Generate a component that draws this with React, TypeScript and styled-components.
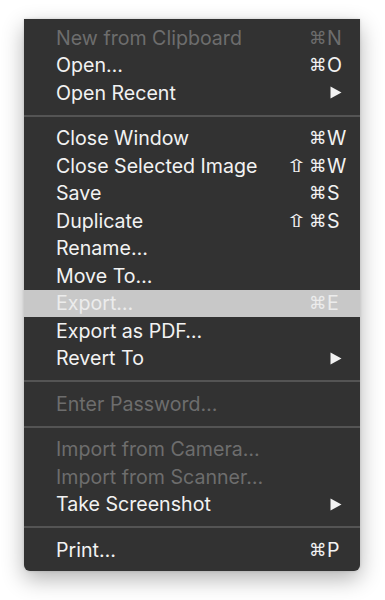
import styled, { createGlobalStyle } from 'styled-components';

type Entry =
  | { kind: 'sep' }
  | {
      kind: 'item';
      label: string;
      mods?: string[];
      keyName?: string;
      submenu?: boolean;
      disabled?: boolean;
      active?: boolean;
    };

const entries: Entry[] = [
  { kind: 'item', label: 'New from Clipboard', mods: ['⌘'], keyName: 'N', disabled: true },
  { kind: 'item', label: 'Open…', mods: ['⌘'], keyName: 'O' },
  { kind: 'item', label: 'Open Recent', submenu: true },
  { kind: 'sep' },
  { kind: 'item', label: 'Close Window', mods: ['⌘'], keyName: 'W' },
  { kind: 'item', label: 'Close Selected Image', mods: ['⇧', '⌘'], keyName: 'W' },
  { kind: 'item', label: 'Save', mods: ['⌘'], keyName: 'S' },
  { kind: 'item', label: 'Duplicate', mods: ['⇧', '⌘'], keyName: 'S' },
  { kind: 'item', label: 'Rename…' },
  { kind: 'item', label: 'Move To…' },
  { kind: 'item', label: 'Export…', mods: ['⌘'], keyName: 'E', active: true },
  { kind: 'item', label: 'Export as PDF…' },
  { kind: 'item', label: 'Revert To', submenu: true },
  { kind: 'sep' },
  { kind: 'item', label: 'Enter Password…', disabled: true },
  { kind: 'sep' },
  { kind: 'item', label: 'Import from Camera…', disabled: true },
  { kind: 'item', label: 'Import from Scanner…', disabled: true },
  { kind: 'item', label: 'Take Screenshot', submenu: true },
  { kind: 'sep' },
  { kind: 'item', label: 'Print…', mods: ['⌘'], keyName: 'P' },
];

function App() {
  return (
    <>
      <GlobalStyle />
      <Page>
        <Menu>
          {entries.map((e, i) =>
            e.kind === 'sep' ? (
              <Separator key={i} />
            ) : (
              <Item key={i} $disabled={e.disabled} $active={e.active}>
                <Label>{e.label}</Label>
                {e.submenu ? (
                  <Arrow viewBox="0 0 12 13">
                    <path d="M0.5 0.5 L11.5 6.5 L0.5 12.5 Z" fill="currentColor" />
                  </Arrow>
                ) : (
                  <>
                    <Mods>
                      {e.mods?.map((m) => (
                        <Glyph key={m} $wide={m === '⇧'}>
                          {m}
                        </Glyph>
                      ))}
                    </Mods>
                    <KeyName>{e.keyName}</KeyName>
                  </>
                )}
              </Item>
            )
          )}
        </Menu>
      </Page>
    </>
  );
}

// style
const GlobalStyle = createGlobalStyle`
  body {
    margin: 0;
    background: #ffffff;
    font-family: Inter, "Noto Sans", sans-serif;
  }
`;

const Page = styled.div`
  padding: 19px 0 30px 24px;
`;

const Menu = styled.div`
  width: 336px;
  padding: 5px 0 7px;
  background-color: #323232;
  border-radius: 0 0 6px 6px;
  box-shadow: 0 8px 22px rgba(0, 0, 0, 0.3), 0 0 3px rgba(0, 0, 0, 0.15);
`;

const Item = styled.div<{ $disabled?: boolean; $active?: boolean }>`
  display: flex;
  align-items: center;
  height: 27.5px;
  padding-left: 32px;
  font-size: 19.6px;
  color: ${({ $disabled, $active }) =>
    $active ? '#ececec' : $disabled ? '#6d6d6d' : '#f2f2f2'};
  background-color: ${({ $active }) => ($active ? '#c8c8c8' : 'transparent')};
`;

const Label = styled.span`
  flex: 1;
  white-space: nowrap;
`;

const Mods = styled.span`
  display: flex;
  gap: 4px;
  margin-right: 2px;
`;

const Glyph = styled.span<{ $wide?: boolean }>`
  display: inline-block;
  width: 16px;
  text-align: center;
  font-family: "DejaVu Sans", sans-serif;
  font-size: 17.5px;
  transform: ${({ $wide }) => ($wide ? 'scaleX(1.55)' : 'none')};
`;

const KeyName = styled.span`
  width: 33px;
`;

const Arrow = styled.svg`
  width: 12px;
  height: 13px;
  margin-right: 18px;
`;

const Separator = styled.div`
  height: 2px;
  margin: 8px 0;
  background-color: #545454;
`;

export default App;
